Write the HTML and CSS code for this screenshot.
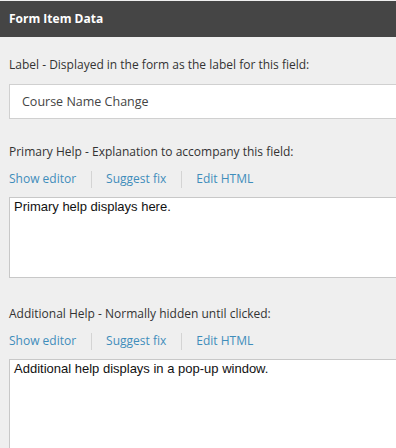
FILE: index.html
```html
<!DOCTYPE html>
<html>
<head>
<meta charset="utf-8">
<link rel="stylesheet" href="styles.css">
</head>
<body>
<div class="panel">
  <div class="header">Form Item Data</div>
  <div class="content">
    <div class="field label-field">
      <div class="field-label">Label - Displayed in the form as the label for this field:</div>
      <div class="input">Course Name Change</div>
    </div>
    <div class="field help-field">
      <div class="field-label">Primary Help - Explanation to accompany this field:</div>
      <div class="links">
        <span class="link">Show editor</span>
        <span class="sep"></span>
        <span class="link">Suggest fix</span>
        <span class="sep"></span>
        <span class="link">Edit HTML</span>
      </div>
      <div class="area">Primary help displays here.</div>
    </div>
    <div class="field help-field extra">
      <div class="field-label">Additional Help - Normally hidden until clicked:</div>
      <div class="links">
        <span class="link">Show editor</span>
        <span class="sep"></span>
        <span class="link">Suggest fix</span>
        <span class="sep"></span>
        <span class="link">Edit HTML</span>
      </div>
      <div class="area tall">Additional help displays in a pop-up window.</div>
    </div>
  </div>
</div>
</body>
</html>
```
FILE: styles.css
```css
html, body {
  margin: 0;
  padding: 0;
  background: #efefef;
}
body {
  font-family: "Open Sans", "Liberation Sans", sans-serif;
  font-size: 12px;
  color: #333;
}
.panel {
  box-sizing: border-box;
  height: 448px;
  padding-top: 1px;
  overflow: hidden;
}
.header {
  height: 36px;
  background: #454545;
  color: #fff;
  font-weight: 700;
  font-size: 12px;
  line-height: 36px;
  padding-left: 9px;
}
.content {
  padding-left: 9px;
}
.field {
  display: flex;
  flex-direction: column;
}
.field-label {
  line-height: 18px;
  white-space: nowrap;
}
.label-field {
  padding-top: 19px;
}
.label-field .field-label {
  margin-bottom: 10px;
}
.input {
  box-sizing: border-box;
  height: 35px;
  background: #fff;
  border: 1px solid #d0d0d0;
  border-right: none;
  padding-left: 12px;
  display: flex;
  align-items: center;
  font-size: 12.5px;
  color: #444;
}
.help-field {
  padding-top: 24px;
}
.help-field.extra {
  padding-top: 27px;
}
.links {
  display: flex;
  align-items: center;
  height: 18px;
  margin-top: 9px;
  margin-bottom: 9px;
}
.link {
  color: #3f8dbb;
  line-height: 18px;
}
.sep {
  width: 1px;
  height: 17px;
  background: #d4d4d4;
  margin: 0 14.5px;
}
.area {
  box-sizing: border-box;
  height: 81px;
  background: #fff;
  border: 1px solid #c8c8c8;
  border-right: none;
  padding: 1px 4px;
  font-family: "Liberation Sans", Arial, sans-serif;
  font-size: 13px;
  line-height: 15px;
  color: #111;
}
.area.tall {
  height: 89px;
  border-bottom: none;
}
```
